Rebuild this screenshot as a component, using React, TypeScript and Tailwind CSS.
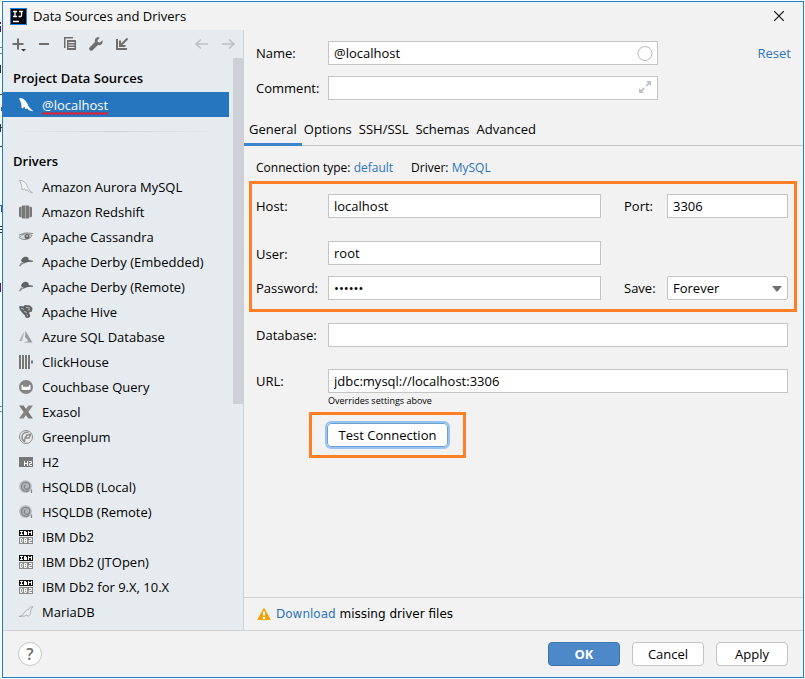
import clsx from "clsx";
import type { ReactNode } from "react";

export default function App() {
  return (
    <div className="relative flex flex-col bg-[#fbfdf8] pt-px pr-px pb-px pl-0.5 min-h-screen font-['Open_Sans','Noto_Sans',sans-serif] text-[13px] text-black leading-5">
      <EditorEdge />
      <div className="flex flex-col grow bg-[#f2f2f2] border border-[#1a80cc]">
        <TitleBar />
        <div className="flex grow">
          <Sidebar />
          <main className="flex flex-col grow min-w-0">
            <NameFields />
            <Tabs />
            <General />
            <div className="flex items-center gap-1 mt-auto px-3 border-[#d1d1d1] border-t h-[33px] font-['DejaVu_Sans',sans-serif] text-[12px]">
              <WarningIcon />
              <p>
                <a href="#download" className="text-[#2e74b8]">
                  Download
                </a>{" "}
                missing driver files
              </p>
            </div>
          </main>
        </div>
        <Footer />
      </div>
    </div>
  );
}

// sliver of the editor left visible behind the dialog
function EditorEdge() {
  return (
    <svg
      aria-hidden="true"
      className="top-0 left-0 absolute"
      width="2"
      height="420"
      viewBox="0 0 2 420"
    >
      <path d="M0 22h1v2H0zM0 26h1v6H0zM0 283h1v9H0z" fill="#660e7a" />
      <path d="M0 47h2v1H0zM0 53h2v1H0zM0 406h2v1H0zM0 411h2v1H0z" fill="#8c8a4a" />
      <path
        d="M0 65h1v8H0zM0 94h2v1H0zM0 124h1v8H0zM0 127h2v1H0zM0 146h2v1H0zM0 226h2v1H0zM0 229h2v1H0zM0 232h2v1H0z"
        fill="#333"
      />
      <path d="M1 107h1v4H1zM0 205h2v1H0zM1 206h1v6H1z" fill="#2b5aa8" />
    </svg>
  );
}

function TitleBar() {
  return (
    <header className="flex items-center gap-1.5 px-[7px] h-7">
      <svg width="17" height="17" viewBox="0 0 17 17">
        <rect width="17" height="17" fill="#1f7ef0" />
        <rect x="1" y="1" width="15" height="15" fill="#08090c" />
        <path
          d="M3 3.500h4M5 3.500v5M3 8.500h4M9 3.500h4M11.500 3.500v4q0 1-1 1h-2M3 13.500h6"
          fill="none"
          stroke="#fff"
          strokeWidth="1.300"
        />
      </svg>
      <h1 className="grow">Data Sources and Drivers</h1>
      <button aria-label="Close" className="mr-3">
        <svg width="10" height="10" viewBox="0 0 10 10">
          <path d="M0 0l10 10M10 0L0 10" stroke="#111" strokeWidth="1.200" />
        </svg>
      </button>
    </header>
  );
}

function Sidebar() {
  return (
    <aside className="flex flex-col bg-[#e6ebef] border-[#d1d1d1] border-r w-[241px] shrink-0">
      <Toolbar />
      <div className="flex grow">
        <nav className="w-[226px]">
          <h2 className="px-2.5 pt-2.5 pb-1 font-semibold">
            Project Data Sources
          </h2>
          <a
            href="#localhost"
            className="flex items-center gap-2 bg-[#2675bf] px-[15px] h-6.25 text-white"
          >
            <DolphinIcon fill="#fff" stroke="#fff" />
            <span className="relative">
              @localhost
              <Squiggle />
            </span>
          </a>
          <div className="bg-linear-to-r from-transparent via-[#cfd3d7] to-transparent mx-2.5 my-3.5 h-px" />
          <h2 className="px-2.5 pt-[5px] pb-[3px] font-semibold">Drivers</h2>
          <ul>
            {drivers.map((driver) => (
              <li key={driver.name}>
                <a
                  href="#driver"
                  className="flex items-center gap-2 px-[15px] h-6.25"
                >
                  {driver.icon}
                  {driver.name}
                </a>
              </li>
            ))}
          </ul>
        </nav>
        <div className="bg-[#cdd1d7] ml-auto w-2.5 h-[346px]" />
      </div>
    </aside>
  );
}

function Squiggle() {
  return (
    <svg
      aria-hidden="true"
      className="bottom-0 left-0 absolute w-full h-[3px]"
    >
      <defs>
        <pattern
          id="squiggle"
          width="4"
          height="3"
          patternUnits="userSpaceOnUse"
        >
          <path
            d="M0 2.500L2 .5l2 2"
            fill="none"
            stroke="#f01824"
            strokeWidth="1.500"
          />
        </pattern>
      </defs>
      <rect width="100%" height="3" fill="url(#squiggle)" />
    </svg>
  );
}

function Toolbar() {
  return (
    <div className="flex items-center gap-2.5 px-[7px] h-7">
      <button aria-label="Add">
        <svg width="16" height="16" viewBox="0 0 16 16">
          <path d="M8 2.500v11M2.500 8h11" stroke="#6e6e6e" strokeWidth="2" />
          <path d="M11 13h5l-2.500 2.500z" fill="#333" />
        </svg>
      </button>
      <button aria-label="Remove">
        <svg width="16" height="16" viewBox="0 0 16 16">
          <path d="M3 8h10" stroke="#6e6e6e" strokeWidth="2" />
        </svg>
      </button>
      <button aria-label="Duplicate">
        <svg width="16" height="16" viewBox="0 0 16 16">
          <path d="M2 1h9v1.500H3.500V12H2z" fill="#6e6e6e" />
          <path
            d="M5 4h9v10H5zM6.500 6v1h6V6zM6.500 8.500v1h6v-1zM6.500 11v1h6v-1z"
            fill="#6e6e6e"
            fillRule="evenodd"
          />
        </svg>
      </button>
      <button aria-label="Settings">
        <svg width="16" height="16" viewBox="0 0 16 16">
          <path
            d="M14.300 4.200L12 6.500 9.800 6.200 9.500 4l2.300-2.300C10 .9 8 1.500 7.200 3c-.5 1-.5 2-.2 3L1.500 11.600c-.6.600-.6 1.500 0 2.100l.7.700c.6.600 1.500.600 2.100 0L10 8.900c1 .4 2.200.3 3.100-.3 1.500-1 1.900-2.900 1.200-4.400z"
            fill="#6e6e6e"
          />
        </svg>
      </button>
      <button aria-label="Make global" className="grow">
        <svg width="16" height="16" viewBox="0 0 16 16">
          <path
            d="M3 3v10h10M13.500 2.500L7 9M6 4.500V10h5.500"
            fill="none"
            stroke="#6e6e6e"
            strokeWidth="2"
          />
        </svg>
      </button>
      <button aria-label="Back">
        <ArrowIcon d="M14 8H2M7 3.500L2 8l5 4.500" />
      </button>
      <button aria-label="Forward">
        <ArrowIcon d="M2 8h12M9 3.500L14 8l-5 4.500" />
      </button>
    </div>
  );
}

function NameFields() {
  return (
    <div className="flex justify-between items-start gap-4 pt-[11px] pr-3 pl-3">
      <div className="items-center gap-y-[11px] grid grid-cols-[72px_minmax(0,330px)] grow">
        <label htmlFor="name">Name:</label>
        <div className="relative">
          <Input id="name" defaultValue="@localhost" />
          <svg
            className="top-1 right-1 absolute"
            width="18"
            height="18"
            viewBox="0 0 18 18"
          >
            <circle cx="9" cy="8.500" r="7" fill="none" stroke="#b4b9be" />
          </svg>
        </div>
        <label htmlFor="comment">Comment:</label>
        <div className="relative">
          <Input id="comment" />
          <svg
            className="top-1 right-1 absolute"
            width="16"
            height="16"
            viewBox="0 0 16 16"
          >
            <path
              d="M8 1h5v5l-1.700-1.700-2.500 2.500-1.300-1.300L10 3zM1 8v5h5l-1.700-1.700 2.500-2.500-1.300-1.300L3 10z"
              fill="#bcc1c6"
            />
          </svg>
        </div>
      </div>
      <a href="#reset" className="pt-0.5 text-[#2e74b8]">
        Reset
      </a>
    </div>
  );
}

function Tabs() {
  return (
    <div
      role="tablist"
      className="flex gap-[7px] mt-3.5 px-[5px] border-[#c4c4c4] border-b h-8"
    >
      {tabs.map((tab, index) => (
        <button
          key={tab}
          role="tab"
          aria-selected={index === 0}
          className={clsx(
            "-mb-px border-b-3",
            index === 0
              ? "-mx-[5px] border-[#4083c9] px-[5px]"
              : "border-transparent",
          )}
        >
          {tab}
        </button>
      ))}
    </div>
  );
}

function General() {
  return (
    <form>
      <p className="flex gap-[18px] px-3 pt-3 pb-[3px] text-[12px]">
        <span>
          Connection type:{" "}
          <a href="#type" className="text-[#2e74b8]">
            default
          </a>
        </span>
        <span>
          Driver:{" "}
          <a href="#driver" className="text-[#2e74b8]">
            MySQL
          </a>
        </span>
      </p>

      <div className="items-center grid grid-cols-[72px_minmax(0,1fr)_66px_121px] mr-1.5 ml-[5px] pt-2.5 pr-1.5 pb-[9px] pl-1 border-[#ff7f27] border-3">
        <label htmlFor="host">Host:</label>
        <Input id="host" defaultValue="localhost" />
        <label htmlFor="port" className="pl-[23px]">
          Port:
        </label>
        <Input id="port" defaultValue="3306" />

        <label htmlFor="user" className="mt-6">
          User:
        </label>
        <Input id="user" defaultValue="root" className="mt-[23px]" />
        <span className="col-span-2" />

        <label htmlFor="password" className="mt-[11px]">
          Password:
        </label>
        <Input
          id="password"
          type="password"
          defaultValue="secret"
          className="mt-[11px]"
        />
        <label htmlFor="save" className="mt-[11px] pl-[23px]">
          Save:
        </label>
        <div className="relative mt-[11px]">
          <select
            id="save"
            className="bg-white px-[5px] border border-[#c4c4c4] rounded-xs w-full h-6 appearance-none"
          >
            <option>Forever</option>
          </select>
          <svg
            className="top-2.5 right-1.5 absolute pointer-events-none"
            width="10"
            height="6"
            viewBox="0 0 10 6"
          >
            <path d="M0 0h10L5 6z" fill="#6e6e6e" />
          </svg>
        </div>
      </div>

      <div className="items-center grid grid-cols-[72px_minmax(0,1fr)] pt-[11px] pr-[15px] pl-3">
        <label htmlFor="database">Database:</label>
        <Input id="database" />
        <label htmlFor="url" className="mt-5.5">
          URL:
        </label>
        <Input
          id="url"
          defaultValue="jdbc:mysql://localhost:3306"
          className="mt-5.5"
        />
        <p className="col-start-2 text-[9px] leading-4">
          Overrides settings above
        </p>
      </div>

      <div className="mt-[3px] ml-[65px] px-[15px] py-2 border-[#ff7f27] border-3 w-[157px]">
        <button
          type="button"
          className="bg-white border border-[#6d9fd3] rounded-sm outline-2 outline-[#97c3f3] w-full h-6"
        >
          Test Connection
        </button>
      </div>
    </form>
  );
}

function Footer() {
  return (
    <footer className="flex items-center gap-3 px-[15px] border-[#d1d1d1] border-t h-[47px]">
      <button
        aria-label="Help"
        className="bg-white mr-auto border border-[#c4c4c4] rounded-full w-6 h-6 font-semibold text-[#6e6e6e] text-[16px]"
      >
        ?
      </button>
      <button className="bg-[#4d89c9] border border-[#3d75b2] rounded-sm w-18 h-6 font-bold text-white">
        OK
      </button>
      <button className="bg-white border border-[#c4c4c4] rounded-sm w-18 h-6">
        Cancel
      </button>
      <button className="bg-white border border-[#c4c4c4] rounded-sm w-18 h-6">
        Apply
      </button>
    </footer>
  );
}

function Input({
  id,
  type = "text",
  defaultValue,
  className,
}: {
  id: string;
  type?: string;
  defaultValue?: string;
  className?: string;
}) {
  return (
    <input
      id={id}
      type={type}
      defaultValue={defaultValue}
      className={clsx(
        "block bg-white px-[5px] border border-[#c4c4c4] w-full h-6",
        className,
      )}
    />
  );
}

function Icon({ children }: { children: ReactNode }) {
  return (
    <svg width="16" height="16" viewBox="0 0 16 16" className="shrink-0">
      {children}
    </svg>
  );
}

function ArrowIcon({ d }: { d: string }) {
  return (
    <Icon>
      <path d={d} fill="none" stroke="#bcc1c5" strokeWidth="1.600" />
    </Icon>
  );
}

function DolphinIcon({ fill, stroke }: { fill: string; stroke: string }) {
  return (
    <Icon>
      <path
        d="M1.500 1.500C4 1 6.500 2.500 8 5c1.500 2.500 2 4.500 3.500 6l3 3-4-1.500-1.500-2-1 1.500-1.500-2.500L4 11C4 8 3.500 5 1.500 1.500z"
        fill={fill}
        stroke={stroke}
        strokeWidth="0.800"
        strokeLinejoin="round"
      />
    </Icon>
  );
}

function CapIcon() {
  return (
    <Icon>
      <path
        d="M3 7C3.500 4 6 2.300 9 3c1.300.300 1.800 1.500 1.800 3L15 6.800v.9l-5 .3-4 1.300z"
        fill="#5f6163"
      />
      <path d="M3 8.500l4.500.3L4 10.500 2 12.500 1 12z" fill="#8a8c8e" />
    </Icon>
  );
}

function SpiralIcon() {
  return (
    <Icon>
      <circle cx="7.500" cy="7.500" r="6.300" fill="#b4b7b9" />
      <path
        d="M13.500 14v-3.500M11 11.500c-3 2-7.500 0-7.500-4s4-5 6.500-3.500 2.500 6-1 6.300c-3 .2-3.700-3.700-1.300-4.300"
        fill="none"
        stroke="#808386"
        strokeWidth="1.200"
      />
    </Icon>
  );
}

function Db2Icon() {
  return (
    <Icon>
      <rect x="1" y="1" width="14" height="6" fill="#111" />
      <rect x="1" y="8" width="14" height="7" fill="#8a8a8a" />
      <path
        d="M2 2h3v1H4v2h1v1H2V5h1V3H2zM6 2h2v1h1v1H8v0h1v2H6zM10 2h1v1h2V2h1v4h-1V4h-2v2h-1z"
        fill="#fff"
      />
      <path
        d="M2.500 9.500H4q1.200 2 0 4H2.500zM6.500 9.500h2v4h-2zM6.500 11.500h2M11 9.500h2.500v2H11v2h3"
        fill="none"
        stroke="#fff"
      />
    </Icon>
  );
}

function WarningIcon() {
  return (
    <Icon>
      <path d="M8 1.500L15 14H1z" fill="#f2a30c" />
      <path d="M8 5.500v4M8 11v2" stroke="#fff" strokeWidth="2" />
    </Icon>
  );
}

const tabs = ["General", "Options", "SSH/SSL", "Schemas", "Advanced"];

const drivers = [
  {
    name: "Amazon Aurora MySQL",
    icon: <DolphinIcon fill="#f4f5f6" stroke="#a6a9ab" />,
  },
  {
    name: "Amazon Redshift",
    icon: (
      <Icon>
        <path d="M1 3.500l2-1v11l-2-1zM12 2.500l2 1v9l-2 1z" fill="#777" />
        <path d="M4 1.500h3v13H4zM8 1.500h3v13H8z" fill="#777" />
        <path
          d="M3 2.500h1v11H3zM7 1.500h1v13H7zM11 2.500h1v11h-1z"
          fill="#a5a5a5"
        />
      </Icon>
    ),
  },
  {
    name: "Apache Cassandra",
    icon: (
      <Icon>
        <path
          d="M1 8.500C4 4.500 9 4 14 6.500 12.500 10 6 12.500 1 8.500zM1 6Q7 2.500 15 4.500"
          fill="#d7dadc"
          stroke="#8b8e90"
        />
        <circle cx="9" cy="7.500" r="2.500" fill="#666" />
        <circle cx="9" cy="7" r="0.800" fill="#fff" />
      </Icon>
    ),
  },
  { name: "Apache Derby (Embedded)", icon: <CapIcon /> },
  { name: "Apache Derby (Remote)", icon: <CapIcon /> },
  {
    name: "Apache Hive",
    icon: (
      <Icon>
        <path
          d="M1 2.500L3 2l2 .5L7 1l5 .5 2.500 2.500-.5 3.500-2 .5-1 1 1.500 3-2 2-3-.5-.5-2L4.500 9 2 6z"
          fill="#5f6163"
        />
        <path
          d="M3 4l3 1.500M8 3.500l4 .5M6 7.500l3 1M10 6l2-.5M8.500 10.500l1.500 1.500"
          stroke="#b9bcbe"
          fill="none"
        />
      </Icon>
    ),
  },
  {
    name: "Azure SQL Database",
    icon: (
      <Icon>
        <path d="M6.500 2.500L4 12H1l3.500-6.500z" fill="#b0b3b5" />
        <path d="M7.500 2l7 11.500H5.500l5-1.500L7 8z" fill="#999c9e" />
      </Icon>
    ),
  },
  {
    name: "ClickHouse",
    icon: (
      <Icon>
        <path
          d="M1 1h2v14H1zM4 1h2v14H4zM7 1h2v14H7zM10 1h2v14h-2zM13 6.500h2v3h-2z"
          fill="#777"
        />
      </Icon>
    ),
  },
  {
    name: "Couchbase Query",
    icon: (
      <Icon>
        <circle cx="8" cy="8" r="7" fill="#858585" />
        <path
          d="M3.500 6.500q1-1.500 1.500 0v1q3 .5 6 0v-1q.5-1.500 1.500 0v4q-4.500 1-9 0z"
          fill="#fff"
        />
      </Icon>
    ),
  },
  {
    name: "Exasol",
    icon: (
      <Icon>
        <path d="M1 1.500h4.500L15 14.500h-4.500z" fill="#777" />
        <path d="M10.500 1.500H15L5.500 14.500H1z" fill="#858585" />
      </Icon>
    ),
  },
  {
    name: "Greenplum",
    icon: (
      <Icon>
        <circle cx="8" cy="8" r="6.500" fill="none" stroke="#8e8e8e" />
        <path
          d="M10.500 3.500C7 2.500 4 5 4 8s1.500 4 2.500 4.500L7 9h4l1.500-3.500-3.500.5-2 3"
          fill="none"
          stroke="#8e8e8e"
          strokeWidth="1.500"
        />
      </Icon>
    ),
  },
  {
    name: "H2",
    icon: (
      <Icon>
        <rect x="1" y="3" width="14" height="10" fill="#777" />
        <path
          d="M6.500 7v5M9.500 7v5M6.500 9.500h3M11 7.500h2.500v2H11.500v2H14"
          fill="none"
          stroke="#fff"
        />
      </Icon>
    ),
  },
  { name: "HSQLDB (Local)", icon: <SpiralIcon /> },
  { name: "HSQLDB (Remote)", icon: <SpiralIcon /> },
  { name: "IBM Db2", icon: <Db2Icon /> },
  { name: "IBM Db2 (JTOpen)", icon: <Db2Icon /> },
  { name: "IBM Db2 for 9.X, 10.X", icon: <Db2Icon /> },
  {
    name: "MariaDB",
    icon: (
      <Icon>
        <path
          d="M1 12.500l3-1 4-5 3-1.500 1.500-2 2.500-.5-2 3-1 5-2 2-1-1.500-2 1z"
          fill="#eceff1"
          stroke="#a0a3a5"
          strokeWidth="0.800"
        />
      </Icon>
    ),
  },
];
